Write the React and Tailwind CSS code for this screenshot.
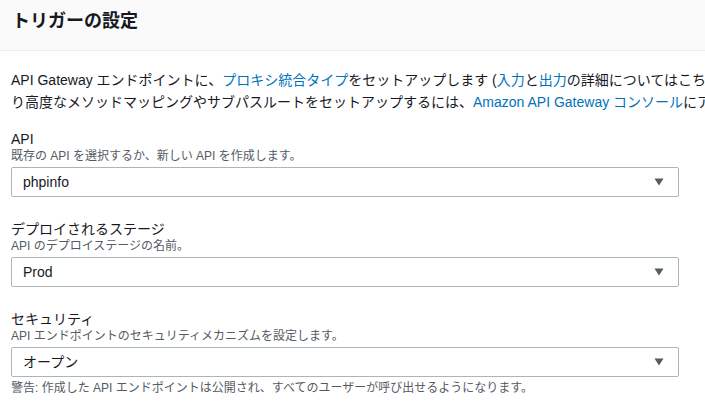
import React from "react";

const F = { fontFamily: '"Liberation Sans", "Noto Sans CJK JP", sans-serif' };

function Arrow() {
  return (
    <svg width="10" height="8" viewBox="0 0 10 8" className="shrink-0">
      <path d="M0.5 0.5 H9.5 L5 7.5 Z" fill="#545b64" />
    </svg>
  );
}

function Field({ label, desc, value }) {
  return (
    <div className="flex flex-col">
      <div className="text-[14px] leading-[18px] text-[#16191f]">{label}</div>
      <div className="text-[12px] leading-[17px] text-[#545b64]">{desc}</div>
      <div className="mt-[2px] w-[668px] h-[30px] border border-[#aab7b8] rounded-[2px] bg-white flex items-center justify-between pl-[11px] pr-[14px]">
        <span className="text-[14px] text-[#16191f]">{value}</span>
        <Arrow />
      </div>
    </div>
  );
}

export default function App() {
  return (
    <div style={F} className="w-[705px] h-[414px] overflow-hidden bg-white text-[#16191f]">
      <div className="h-[51px] bg-[#fafafa] border-b border-[#eaeded] flex items-center pl-[12px] pb-[8px]">
        <h1 className="text-[18px] font-bold text-[#16191f]">トリガーの設定</h1>
      </div>
      <div className="pl-[11px] pt-[18px]">
        <div className="text-[14px] leading-[22px] whitespace-nowrap">
          <div>
            API Gateway エンドポイントに、
            <span className="text-[#0073bb]">プロキシ統合タイプ</span>
            をセットアップします (<span className="text-[#0073bb]">入力</span>と<span className="text-[#0073bb]">出力</span>の詳細についてはこちらを参照)。
          </div>
          <div>
            り高度なメソッドマッピングやサブパスルートをセットアップするには、
            <span className="text-[#0073bb]">Amazon API Gateway コンソール</span>
            にアクセスしてください。
          </div>
        </div>
        <div className="mt-[17px] flex flex-col gap-[23px]">
          <Field label="API" desc="既存の API を選択するか、新しい API を作成します。" value="phpinfo" />
          <Field label="デプロイされるステージ" desc="API のデプロイステージの名前。" value="Prod" />
          <div className="flex flex-col">
            <Field label="セキュリティ" desc="API エンドポイントのセキュリティメカニズムを設定します。" value="オープン" />
            <div className="mt-[3px] text-[12px] leading-[17px] text-[#545b64]">
              警告: 作成した API エンドポイントは公開され、すべてのユーザーが呼び出せるようになります。
            </div>
          </div>
        </div>
      </div>
    </div>
  );
}
